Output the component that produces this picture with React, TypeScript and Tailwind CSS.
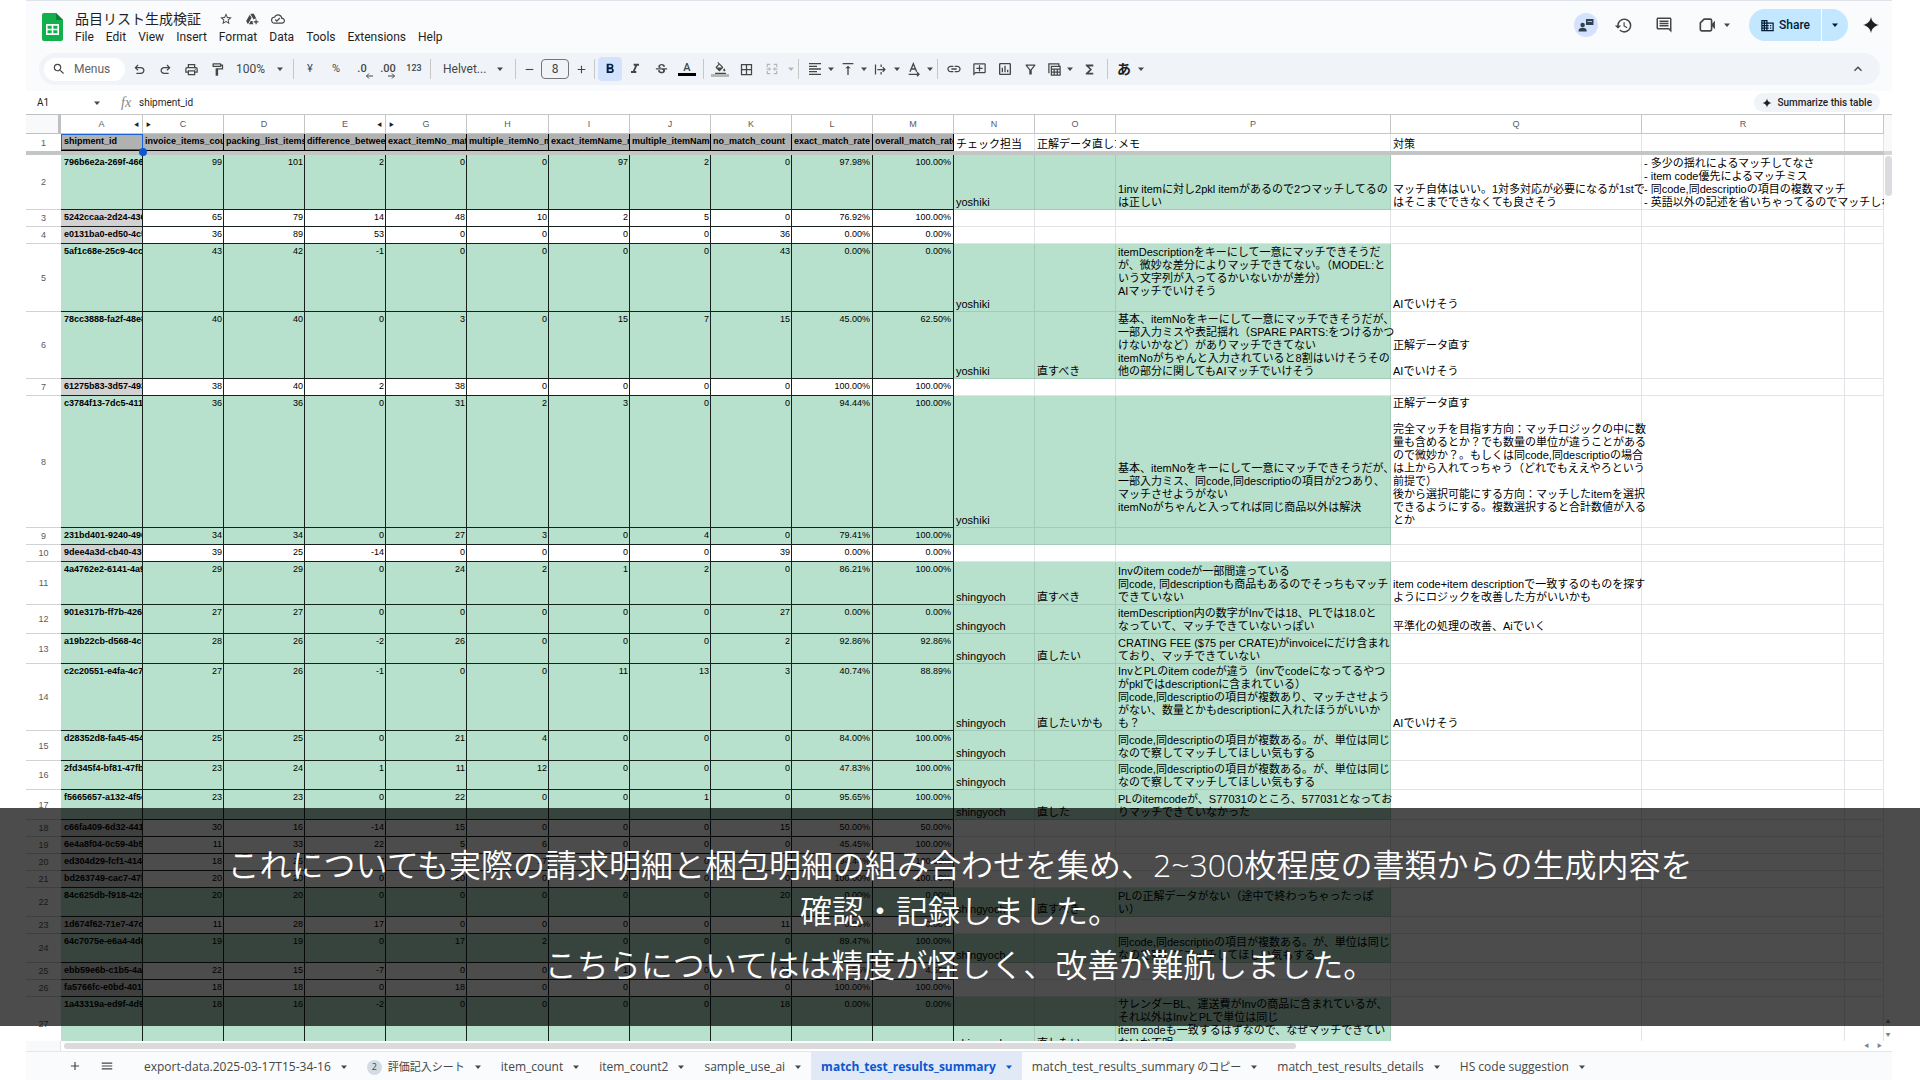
import type { ReactNode } from "react";
import clsx from "clsx";
import {
  MdAdd,
  MdBorderAll,
  MdDomain,
  MdExpandLess,
  MdFormatAlignLeft,
  MdFormatBold,
  MdFormatColorFill,
  MdFormatItalic,
  MdFunctions,
  MdHistory,
  MdLink,
  MdMenu,
  MdOutlineAddComment,
  MdOutlineAddToDrive,
  MdOutlineCloudDone,
  MdOutlineComment,
  MdOutlineFilterAlt,
  MdOutlineFormatPaint,
  MdOutlineInsertChart,
  MdOutlinePrint,
  MdRemove,
  MdSearch,
  MdStarBorder,
  MdStrikethroughS,
  MdVerticalAlignTop,
} from "react-icons/md";

type SheetRow = {
  no: number;
  height: string;
  green?: boolean;
  id: string;
  values: string[];
  checker?: string;
  fix?: string;
  memo?: string;
  plan?: string;
  extra?: string;
};

const ROWS: SheetRow[] = [
  {
    no: 2,
    height: "h-[55px]",
    green: true,
    id: "796b6e2a-269f-4664",
    values: ["99", "101", "2", "0", "0", "97", "2", "0", "97.98%", "100.00%"],
    checker: "yoshiki",
    memo: "1inv itemに対し2pkl itemがあるので2つマッチしてるの\nは正しい",
    plan: "マッチ自体はいい。1対多対応が必要になるが1stで\nはそこまでできなくても良さそう",
    extra:
      "- 多少の揺れによるマッチしてなさ\n- item code優先によるマッチミス\n- 同code,同descriptioの項目の複数マッチ\n- 英語以外の記述を省いちゃってるのでマッチしない",
  },
  {
    no: 3,
    height: "h-[17px]",
    id: "5242ccaa-2d24-4368",
    values: ["65", "79", "14", "48", "10", "2", "5", "0", "76.92%", "100.00%"],
  },
  {
    no: 4,
    height: "h-[17px]",
    id: "e0131ba0-ed50-4c52",
    values: ["36", "89", "53", "0", "0", "0", "0", "36", "0.00%", "0.00%"],
  },
  {
    no: 5,
    height: "h-[68px]",
    green: true,
    id: "5af1c68e-25c9-4cc1",
    values: ["43", "42", "-1", "0", "0", "0", "0", "43", "0.00%", "0.00%"],
    checker: "yoshiki",
    memo: "itemDescriptionをキーにして一意にマッチできそうだ\nが、微妙な差分によりマッチできてない。（MODEL:と\nいう文字列が入ってるかいないかが差分）\nAIマッチでいけそう\n ",
    plan: "AIでいけそう",
  },
  {
    no: 6,
    height: "h-[67px]",
    green: true,
    id: "78cc3888-fa2f-48e8",
    values: ["40", "40", "0", "3", "0", "15", "7", "15", "45.00%", "62.50%"],
    checker: "yoshiki",
    fix: "直すべき",
    memo: "基本、itemNoをキーにして一意にマッチできそうだが、\n一部入力ミスや表記揺れ（SPARE PARTS:をつけるかつ\nけないかなど）がありマッチできてない\nitemNoがちゃんと入力されていると8割はいけそうその\n他の部分に関してもAIマッチでいけそう",
    plan: "正解データ直す\n\nAIでいけそう",
  },
  {
    no: 7,
    height: "h-[17px]",
    id: "61275b83-3d57-493a",
    values: ["38", "40", "2", "38", "0", "0", "0", "0", "100.00%", "100.00%"],
  },
  {
    no: 8,
    height: "h-[132px]",
    green: true,
    id: "c3784f13-7dc5-4114",
    values: ["36", "36", "0", "31", "2", "3", "0", "0", "94.44%", "100.00%"],
    checker: "yoshiki",
    memo: "基本、itemNoをキーにして一意にマッチできそうだが、\n一部入力ミス、同code,同descriptioの項目が2つあり、\nマッチさせようがない\nitemNoがちゃんと入ってれば同じ商品以外は解決\n ",
    plan: "正解データ直す\n\n完全マッチを目指す方向：マッチロジックの中に数\n量も含めるとか？でも数量の単位が違うことがある\nので微妙か？。もしくは同code,同descriptioの場合\nは上から入れてっちゃう（どれでもええやろという\n前提で）\n後から選択可能にする方向：マッチしたitemを選択\nできるようにする。複数選択すると合計数値が入る\nとか",
  },
  {
    no: 9,
    height: "h-[17px]",
    green: true,
    id: "231bd401-9240-4968",
    values: ["34", "34", "0", "27", "3", "0", "4", "0", "79.41%", "100.00%"],
  },
  {
    no: 10,
    height: "h-[17px]",
    id: "9dee4a3d-cb40-43c1",
    values: ["39", "25", "-14", "0", "0", "0", "0", "39", "0.00%", "0.00%"],
  },
  {
    no: 11,
    height: "h-[43px]",
    green: true,
    id: "4a4762e2-6141-4a9b",
    values: ["29", "29", "0", "24", "2", "1", "2", "0", "86.21%", "100.00%"],
    checker: "shingyoch",
    fix: "直すべき",
    memo: "Invのitem codeが一部間違っている\n同code, 同descriptionも商品もあるのでそっちもマッチ\nできていない",
    plan: "item code+item descriptionで一致するのものを探す\nようにロジックを改善した方がいいかも",
  },
  {
    no: 12,
    height: "h-[29px]",
    green: true,
    id: "901e317b-ff7b-4268",
    values: ["27", "27", "0", "0", "0", "0", "0", "27", "0.00%", "0.00%"],
    checker: "shingyoch",
    memo: "itemDescription内の数字がInvでは18、PLでは18.0と\nなっていて、マッチできていないっぽい",
    plan: "平準化の処理の改善、Aiでいく",
  },
  {
    no: 13,
    height: "h-[30px]",
    green: true,
    id: "a19b22cb-d568-4c71",
    values: ["28", "26", "-2", "26", "0", "0", "0", "2", "92.86%", "92.86%"],
    checker: "shingyoch",
    fix: "直したい",
    memo: "CRATING FEE ($75 per CRATE)がinvoiceにだけ含まれ\nており、マッチできていない",
  },
  {
    no: 14,
    height: "h-[67px]",
    green: true,
    id: "c2c20551-e4fa-4c71",
    values: ["27", "26", "-1", "0", "0", "11", "13", "3", "40.74%", "88.89%"],
    checker: "shingyoch",
    fix: "直したいかも",
    memo: "InvとPLのitem codeが違う（invでcodeになってるやつ\nがpklではdescriptionに含まれている）\n同code,同descriptioの項目が複数あり、マッチさせよう\nがない、数量とかもdescriptionに入れたほうがいいか\nも？",
    plan: "AIでいけそう",
  },
  {
    no: 15,
    height: "h-[30px]",
    green: true,
    id: "d28352d8-fa45-4541",
    values: ["25", "25", "0", "21", "4", "0", "0", "0", "84.00%", "100.00%"],
    checker: "shingyoch",
    memo: "同code,同descriptioの項目が複数ある。が、単位は同じ\nなので察してマッチしてほしい気もする",
  },
  {
    no: 16,
    height: "h-[29px]",
    green: true,
    id: "2fd345f4-bf81-47fb-",
    values: ["23", "24", "1", "11", "12", "0", "0", "0", "47.83%", "100.00%"],
    checker: "shingyoch",
    memo: "同code,同descriptioの項目が複数ある。が、単位は同じ\nなので察してマッチしてほしい気もする",
  },
  {
    no: 17,
    height: "h-[30px]",
    green: true,
    id: "f5665657-a132-4f5c",
    values: ["23", "23", "0", "22", "0", "0", "1", "0", "95.65%", "100.00%"],
    checker: "shingyoch",
    fix: "直した",
    memo: "PLのitemcodeが、S77031のところ、577031となってお\nりマッチできていなかった",
  },
  {
    no: 18,
    height: "h-[17px]",
    id: "c66fa409-6d32-4412",
    values: ["30", "16", "-14", "15", "0", "0", "0", "15", "50.00%", "50.00%"],
  },
  {
    no: 19,
    height: "h-[17px]",
    id: "6e4a8f04-0c59-4b5c",
    values: ["11", "33", "22", "5", "6", "0", "0", "0", "45.45%", "100.00%"],
  },
  {
    no: 20,
    height: "h-[17px]",
    id: "ed304d29-fcf1-4144",
    values: ["18", "25", "7", "1", "17", "0", "0", "0", "94.44%", "100.00%"],
  },
  {
    no: 21,
    height: "h-[17px]",
    id: "bd263749-cac7-47b1",
    values: ["20", "20", "0", "20", "0", "0", "0", "0", "100.00%", "100.00%"],
  },
  {
    no: 22,
    height: "h-[29px]",
    green: true,
    id: "84c625db-f918-42c0",
    values: ["20", "20", "0", "0", "0", "0", "0", "20", "0.00%", "0.00%"],
    checker: "shingyoch",
    fix: "直すべき",
    memo: "PLの正解データがない（途中で終わっちゃったっぽ\nい）",
  },
  {
    no: 23,
    height: "h-[17px]",
    id: "1d674f62-71e7-47c0",
    values: ["11", "28", "17", "0", "0", "0", "0", "11", "0.00%", "0.00%"],
  },
  {
    no: 24,
    height: "h-[29px]",
    green: true,
    id: "64c7075e-e6a4-4d8b",
    values: ["19", "19", "0", "17", "2", "0", "0", "0", "89.47%", "100.00%"],
    checker: "shingyoch",
    memo: "同code,同descriptioの項目が複数ある。が、単位は同じ\nなので察してマッチしてほしい気もする",
  },
  {
    no: 25,
    height: "h-[17px]",
    id: "ebb59e6b-c1b5-4aa1",
    values: ["22", "15", "-7", "0", "0", "1", "0", "21", "4.55%", "4.55%"],
  },
  {
    no: 26,
    height: "h-[17px]",
    id: "fa5766fc-e0bd-4018",
    values: ["18", "18", "0", "18", "0", "0", "0", "0", "100.00%", "100.00%"],
  },
  {
    no: 27,
    height: "h-[54px]",
    green: true,
    id: "1a43319a-ed9f-4d9b",
    values: ["18", "16", "-2", "0", "0", "0", "0", "18", "0.00%", "0.00%"],
    checker: "shingyoch",
    fix: "直したい",
    memo: "サレンダーBL、運送費がInvの商品に含まれているが、\nそれ以外はInvとPLで単位は同じ\nitem codeも一致するはずなので、なぜマッチできてい\nないか不明",
  },
];

const COLUMNS = [
  { name: "A", width: "w-[82px]", before: false, after: true },
  { name: "C", width: "w-[81px]", before: true, after: false },
  { name: "D", width: "w-[81px]" },
  { name: "E", width: "w-[81px]", before: false, after: true },
  { name: "G", width: "w-[81px]", before: true, after: false },
  { name: "H", width: "w-[82px]" },
  { name: "I", width: "w-[81px]" },
  { name: "J", width: "w-[81px]" },
  { name: "K", width: "w-[81px]" },
  { name: "L", width: "w-[81px]" },
  { name: "M", width: "w-[81px]" },
  { name: "N", width: "w-[81px]" },
  { name: "O", width: "w-[81px]" },
  { name: "P", width: "w-[275px]" },
  { name: "Q", width: "w-[251px]" },
  { name: "R", width: "w-[203px]" },
  { name: "", width: "" },
];

const FIELD_NAMES = [
  "invoice_items_count",
  "packing_list_items_count",
  "difference_between",
  "exact_itemNo_match",
  "multiple_itemNo_match",
  "exact_itemName_match",
  "multiple_itemName_match",
  "no_match_count",
  "exact_match_rate",
  "overall_match_rate",
];

const MENUS = ["File", "Edit", "View", "Insert", "Format", "Data", "Tools", "Extensions", "Help"];

function Caret({ className = "text-[#444746]" }: { className?: string }) {
  return (
    <svg viewBox="0 0 8 8" className={clsx("h-2 w-2 shrink-0", className)} fill="currentColor" aria-hidden="true">
      <path d="M1 2.400h6L4 6z" />
    </svg>
  );
}

function Separator() {
  return <span className="mx-[3px] h-5 w-px shrink-0 bg-[#c7c7c7]" />;
}

function Tool({ label, width = "w-[26px]", children }: { label: string; width?: string; children: ReactNode }) {
  return (
    <button type="button" aria-label={label} className={clsx("flex h-6 shrink-0 items-center justify-center", width)}>
      {children}
    </button>
  );
}

function Glyph({ d, className = "h-4 w-4" }: { d: string; className?: string }) {
  return (
    <svg viewBox="0 0 24 24" className={className} fill="currentColor" aria-hidden="true">
      <path d={d} />
    </svg>
  );
}

const UNDO = "M7 19v-2h7.1q1.575 0 2.738-1T18 13.5 16.838 11 14.1 10H7.8l2.6 2.6L9 14 4 9l5-5 1.4 1.4L7.8 8h6.3q2.425 0 4.163 1.575T20 13.5t-1.737 3.925T14.1 19z";
const SPARK = "M12 1c.9 6.2 4.8 10.1 11 11-6.2.9-10.1 4.8-11 11-.9-6.2-4.8-10.1-11-11 6.2-.9 10.1-4.8 11-11z";

function SheetsLogo() {
  return (
    <svg viewBox="0 0 21 28" className="h-7 w-[21px]" aria-hidden="true">
      <path d="M2 0h12l7 7v19a2 2 0 0 1-2 2H2a2 2 0 0 1-2-2V2a2 2 0 0 1 2-2z" fill="#12b04c" />
      <path d="M14 0l7 7h-7z" fill="#0b8038" />
      <path d="M4 11h13v11H4zM5.6 12.7v3h4.1v-3zM11.3 12.7v3h4.1v-3zM5.6 17.3v3h4.1v-3zM11.3 17.3v3h4.1v-3z" fill="#fff" fillRule="evenodd" />
    </svg>
  );
}

function TitleBar() {
  return (
    <header className="flex h-[52px] items-start justify-between pr-3 pl-4">
      <div className="flex gap-3">
        <div className="pt-3">
          <SheetsLogo />
        </div>
        <div>
          <div className="flex h-9 items-center gap-3 text-[#444746]">
            <h1 className="text-sm text-[#1f1f1f]">品目リスト生成検証</h1>
            <button type="button" aria-label="Star" className="ml-1.5"><MdStarBorder className="size-[14px]" /></button>
            <button type="button" aria-label="Move"><MdOutlineAddToDrive className="size-[14px]" /></button>
            <button type="button" aria-label="Saved to Drive"><MdOutlineCloudDone className="size-[14px]" /></button>
          </div>
          <nav className="-mt-2 flex h-4 items-center gap-3 text-xs text-[#1f1f1f]">
            {MENUS.map((menu) => (
              <button type="button" key={menu}>{menu}</button>
            ))}
          </nav>
        </div>
      </div>

      <div className="flex items-center pt-2 text-[#444746]">
        <button type="button" aria-label="Present" className="flex h-6 w-6 items-center justify-center rounded-full bg-[#d3e3fd]">
          <svg viewBox="0 0 24 24" className="h-[18px] w-[18px]" fill="#33414f" aria-hidden="true">
            <circle cx="7.5" cy="12" r="3" />
            <path d="M2 20.500c0-3.500 2.500-4.700 5.500-4.700s5.500 1.200 5.500 4.700z" />
            <path d="M12 4h10v8h-10z" />
            <path d="M14 7h6v1h-6z" fill="#d3e3fd" />
          </svg>
        </button>
        <button type="button" aria-label="History" className="ml-4"><MdHistory className="size-[19px]" /></button>
        <button type="button" aria-label="Comments" className="ml-[22px]"><MdOutlineComment className="size-[18px]" /></button>
        <button type="button" aria-label="Meet" className="ml-6 flex items-center gap-1.5">
          <svg viewBox="0 0 24 24" className="h-5 w-5" aria-hidden="true">
            <path d="M8.500 5H16q1.500 0 1.500 1.500v11Q17.500 19 16 19H5.500Q4 19 4 17.500v-8z" fill="none" stroke="currentColor" strokeWidth="2" strokeLinejoin="round" />
            <path d="M17.500 11l4-4v10l-4-4z" fill="currentColor" />
          </svg>
          <Caret />
        </button>
        <div className="ml-[18px] flex h-8 overflow-hidden rounded-full bg-[#c2e7ff] text-[#001d35]">
          <button type="button" className="flex w-[73px] items-center justify-center gap-1 border-r border-white text-xs font-medium">
            <MdDomain className="size-[15px]" />
            Share
          </button>
          <button type="button" aria-label="Share options" className="flex w-[26px] items-center justify-center">
            <Caret className="text-[#001d35]" />
          </button>
        </div>
        <button type="button" aria-label="Gemini" className="ml-[14px] text-[#1f1f1f]">
          <Glyph d={SPARK} className="h-[18px] w-[18px]" />
        </button>
      </div>
    </header>
  );
}

function Toolbar() {
  return (
    <div className="mr-3 ml-[13px] flex h-8 items-center rounded-full bg-[#f0f4f9] pl-[5px] text-[#444746]">
      <label className="mr-px flex h-[23px] w-[81px] shrink-0 items-center gap-2 rounded-full bg-white pl-2">
        <MdSearch className="size-[14px] shrink-0" />
        <input aria-label="Menus" placeholder="Menus" className="w-12 text-xs outline-none placeholder:text-[#5f6368]" />
      </label>
      <Tool label="Undo"><Glyph d={UNDO} className="h-[15px] w-[15px]" /></Tool>
      <Tool label="Redo"><Glyph d={UNDO} className="h-[15px] w-[15px] -scale-x-100" /></Tool>
      <Tool label="Print"><MdOutlinePrint className="size-[15px]" /></Tool>
      <Tool label="Paint format"><MdOutlineFormatPaint className="size-[15px]" /></Tool>
      <label className="ml-1.5 flex w-12 shrink-0 items-center justify-between">
        <select aria-label="Zoom" className="w-10 appearance-none text-xs outline-none">
          <option>100%</option>
        </select>
        <Caret />
      </label>
      <span className="w-1.5" />
      <Separator />
      <Tool label="Format as currency"><span className="text-[11px]">¥</span></Tool>
      <Tool label="Format as percent"><span className="text-[11px]">%</span></Tool>
      <Tool label="Decrease decimals">
        <span className="relative text-[11px] leading-3 font-medium">
          .0
          <svg viewBox="0 0 8 6" className="absolute -right-1.5 -bottom-1 h-1.5 w-2" fill="none" stroke="currentColor" aria-hidden="true"><path d="M8 3H1.500M4 .5L1.500 3 4 5.500" /></svg>
        </span>
      </Tool>
      <Tool label="Increase decimals">
        <span className="relative text-[11px] leading-3 font-medium">
          .00
          <svg viewBox="0 0 8 6" className="absolute right-0 -bottom-1 h-1.5 w-2" fill="none" stroke="currentColor" aria-hidden="true"><path d="M0 3h6.500M4 .5L6.500 3 4 5.500" /></svg>
        </span>
      </Tool>
      <Tool label="More formats"><span className="text-[9px] font-medium">123</span></Tool>
      <Separator />
      <label className="ml-[9px] flex w-[61px] shrink-0 items-center justify-between">
        <select aria-label="Font" className="w-12 appearance-none text-xs outline-none">
          <option>Helvet...</option>
        </select>
        <Caret />
      </label>
      <span className="w-2" />
      <Separator />
      <Tool label="Decrease font size" width="w-5"><MdRemove className="size-[13px]" /></Tool>
      <input aria-label="Font size" defaultValue="8" className="mx-0.5 h-5 w-7 shrink-0 rounded border border-[#747775] text-center text-xs outline-none" />
      <Tool label="Increase font size" width="w-5"><MdAdd className="size-[13px]" /></Tool>
      <Separator />
      <button type="button" aria-label="Bold" className="flex h-6 w-6 shrink-0 items-center justify-center rounded bg-[#d3e3fd] text-[#041e49]">
        <MdFormatBold className="size-4" />
      </button>
      <Tool label="Italic"><MdFormatItalic className="size-4" /></Tool>
      <Tool label="Strikethrough"><MdStrikethroughS className="size-[15px]" /></Tool>
      <Tool label="Text color">
        <span className="flex flex-col items-center">
          <span className="text-[11px] leading-[11px] font-medium">A</span>
          <span className="h-[3px] w-[18px] bg-black" />
        </span>
      </Tool>
      <Separator />
      <Tool label="Fill color">
        <span className="flex flex-col items-center">
          <MdFormatColorFill className="-mb-px size-[13px]" />
          <span className="h-[3px] w-[18px] bg-[#b7b7b7]" />
        </span>
      </Tool>
      <Tool label="Borders"><MdBorderAll className="size-[15px]" /></Tool>
      <Tool label="Merge cells">
        <svg viewBox="0 0 24 24" className="h-[14px] w-[14px] text-[#b4b7ba]" fill="none" stroke="currentColor" strokeWidth="2" aria-hidden="true">
          <path d="M9 4H4v5M15 4h5v5M9 20H4v-5M15 20h5v-5M2 12h7M6.500 9.500L9 12l-2.500 2.500M22 12h-7M17.500 9.500L15 12l2.500 2.500" />
        </svg>
      </Tool>
      <span className="w-0.5" />
      <Caret className="text-[#b4b7ba]" />
      <Separator />
      <Tool label="Horizontal align" width="w-[25px]"><MdFormatAlignLeft className="size-4" /></Tool>
      <Caret />
      <Tool label="Vertical align" width="w-[25px]"><MdVerticalAlignTop className="size-4" /></Tool>
      <Caret />
      <Tool label="Text wrapping" width="w-[25px]">
        <svg viewBox="0 0 24 24" className="h-[15px] w-[15px]" fill="none" stroke="currentColor" strokeWidth="2" aria-hidden="true">
          <path d="M4 4v16M13 4v4M13 16v4M7 12h12M15.500 8.500L19 12l-3.500 3.500" />
        </svg>
      </Tool>
      <Caret />
      <Tool label="Text rotation" width="w-[25px]">
        <svg viewBox="0 0 24 24" className="h-4 w-4" fill="none" stroke="currentColor" strokeWidth="2" aria-hidden="true">
          <path d="M6 16L11 4l5 12M8 12h6M4 20h15M16.500 17l3 3-3 3" />
        </svg>
      </Tool>
      <Caret />
      <Separator />
      <Tool label="Insert link" width="w-[25px]"><MdLink className="size-4" /></Tool>
      <Tool label="Insert comment"><MdOutlineAddComment className="size-[15px] -scale-x-100" /></Tool>
      <Tool label="Insert chart" width="w-[25px]"><MdOutlineInsertChart className="size-4" /></Tool>
      <Tool label="Create a filter"><MdOutlineFilterAlt className="size-[15px]" /></Tool>
      <Tool label="Table views" width="w-[23px]">
        <svg viewBox="0 0 24 24" className="h-[15px] w-[15px]" fill="none" stroke="currentColor" strokeWidth="2" aria-hidden="true">
          <path d="M3 18V3h16v3M7 7h14v14H7zM7 11.500h14M7 16h14M11.500 11.500V21M16.500 11.500V21" />
        </svg>
      </Tool>
      <Caret />
      <Tool label="Functions" width="w-[30px]"><MdFunctions className="size-[15px]" /></Tool>
      <Separator />
      <Tool label="Input tools"><span className="text-sm font-bold text-[#1f1f1f]">あ</span></Tool>
      <Caret />
      <button type="button" aria-label="Hide the menus" className="mr-[14px] ml-auto">
        <MdExpandLess className="size-4" />
      </button>
    </div>
  );
}

function FormulaBar() {
  return (
    <div className="mt-1.5 flex h-[23px] shrink-0 items-center bg-white pr-3 pl-[11px] text-[10px] text-[#1f1f1f]">
      <input aria-label="Name box" defaultValue="A1" className="w-14 outline-none" />
      <Caret />
      <span className="ml-5 w-[18px] font-['Liberation_Serif',serif] text-sm text-[#80868b] italic">fx</span>
      <input aria-label="Formula" defaultValue="shipment_id" className="min-w-0 flex-1 outline-none" />
      <button type="button" className="flex h-[19px] items-center gap-[5px] rounded-full bg-[#f0f4f9] px-2 font-medium">
        <Glyph d={SPARK} className="h-[10px] w-[10px]" />
        Summarize this table
      </button>
    </div>
  );
}

function DataRow({ row }: { row: SheetRow }) {
  const note = clsx("border-r border-b p-0 pl-0.5 align-bottom", row.green ? "border-black/10 bg-[#b7e1cd]" : "border-[#e1e3e6]");
  const plain = "border-r border-b border-[#e1e3e6] p-0 pl-0.5 align-bottom";
  return (
    <tr className={row.height}>
      <th scope="row" className="border-b border-[#d0d2d4] p-0 text-center align-middle text-[9px] leading-3 font-normal text-[#575b5f]">
        {row.no}
      </th>
      <td
        className={clsx(
          "overflow-hidden border-r border-b border-[#17201c] p-0 pt-px pl-[3px] align-top text-[9px] leading-3 font-bold",
          row.green ? "bg-[#b7e1cd]" : "bg-[#d3d2d2]",
        )}
      >
        {row.id}
      </td>
      {row.values.map((value, i) => (
        <td
          key={i}
          className={clsx(
            "border-r border-b border-[#17201c] p-0 pt-px align-top text-right text-[9px] leading-3",
            i > 7 ? "pr-0.5" : "pr-px",
            row.green && "bg-[#b7e1cd]",
          )}
        >
          {value}
        </td>
      ))}
      <td className={note}>{row.checker}</td>
      <td className={note}>{row.fix}</td>
      <td className={note}>{row.memo}</td>
      <td className={plain}>{row.plan}</td>
      <td className={plain}>{row.extra}</td>
      <td className="border-r border-b border-[#e1e3e6] p-0" />
    </tr>
  );
}

function Sheet() {
  return (
    <div className="flex min-h-0 flex-1 overflow-hidden bg-white">
      <div className="min-w-0 flex-1 overflow-hidden">
        <table className="w-full table-fixed border-separate border-spacing-0 font-['Liberation_Sans','Noto_Sans_CJK_JP',sans-serif] text-[11px] leading-[13px] whitespace-pre text-black">
          <colgroup>
            <col className="w-[35px]" />
            {COLUMNS.map((column) => (
              <col key={column.name} className={column.width} />
            ))}
          </colgroup>
          <thead>
            <tr className="h-5 text-[9px] leading-3 text-[#575b5f]">
              <td className="border-t border-r-[3px] border-b border-[#c0c0c0] bg-[#f8f9fa] p-0" />
              {COLUMNS.map((column) => (
                <th key={column.name} scope="col" className="border-t border-r border-b border-[#c4c7c5] p-0 font-normal">
                  <div className="flex items-center justify-between px-[3px]">
                    <span className="w-2 text-left text-[5px] text-[#1f1f1f]">{column.before && "▶"}</span>
                    {column.name}
                    <span className="w-2 text-right text-[5px] text-[#1f1f1f]">{column.after && "◀"}</span>
                  </div>
                </th>
              ))}
            </tr>
            <tr className="h-[17px] text-left">
              <th scope="row" className="p-0 text-center text-[9px] leading-3 font-normal text-[#575b5f]">1</th>
              <td className="relative border-b border-black bg-[#b0b1b1] p-0 pt-px pl-[3px] align-top text-[9px] leading-3 font-bold">
                shipment_id
                <span className="absolute inset-0 border border-[#1a62d6]" />
                <span className="absolute -right-1 -bottom-1.5 z-10 h-2 w-2 rounded-full bg-[#0b57d0]" />
              </td>
              {FIELD_NAMES.map((field) => (
                <th key={field} className="overflow-hidden border-r border-b border-black bg-[#b0b1b1] p-0 pt-px pl-0.5 align-top text-[9px] leading-3 font-bold">
                  {field}
                </th>
              ))}
              <td className="overflow-hidden border-r border-[#e1e3e6] p-0 pl-0.5 align-bottom">チェック担当</td>
              <td className="overflow-hidden p-0 pl-0.5 align-bottom">正解データ直したか</td>
              <td className="border-r border-[#e1e3e6] p-0 pl-0.5 align-bottom">メモ</td>
              <td className="border-r border-[#e1e3e6] p-0 pl-0.5 align-bottom">対策</td>
              <td className="border-r border-[#e1e3e6] p-0" />
              <td className="border-r border-[#e1e3e6] p-0" />
            </tr>
            <tr className="h-1">
              <td colSpan={18} className="bg-[#c4c6c5] p-0" />
            </tr>
          </thead>
          <tbody>
            {ROWS.map((row) => (
              <DataRow key={row.no} row={row} />
            ))}
          </tbody>
        </table>
      </div>
      {/* vertical scroll lane */}
      <div className="flex w-2 shrink-0 flex-col items-center bg-white">
        <div className="h-[37px] w-full border-t border-[#c4c7c5] bg-[#f8f9fa]" />
        <div className="h-1 w-full bg-[#d5d7d6]" />
        <div className="mt-px h-10 w-[7px] rounded-full bg-[#dadce0]" />
        <div className="mt-auto flex flex-col gap-1.5 pb-[3px] text-center text-[5px] leading-[7px] text-[#80868b]">
          <span>▲</span>
          <span>▼</span>
        </div>
      </div>
    </div>
  );
}

type SheetTab = { name: string; suffix?: string; badge?: string; active?: boolean };

const TABS: SheetTab[] = [
  { name: "export-data.2025-03-17T15-34-16" },
  { name: "評価記入シート", badge: "2" },
  { name: "item_count" },
  { name: "item_count2" },
  { name: "sample_use_ai" },
  { name: "match_test_results_summary", active: true },
  { name: "match_test_results_summary", suffix: " のコピー" },
  { name: "match_test_results_details" },
  { name: "HS code suggestion" },
];

function SheetTabs() {
  return (
    <footer className="flex h-7 shrink-0 items-stretch bg-[#f9fbfd] pl-9 font-['Open_Sans','Noto_Sans_CJK_JP',sans-serif] text-[#444746]">
      <button type="button" aria-label="Add sheet" className="w-[26px]"><MdAdd className="mx-auto size-[14px]" /></button>
      <button type="button" aria-label="All sheets" className="mr-[14px] ml-1.5 w-[26px]"><MdMenu className="mx-auto size-[14px]" /></button>
      {TABS.map((tab, i) => (
        <button
          type="button"
          key={i}
          className={clsx(
            "flex items-center gap-[9px] pt-0.5 pr-[9px] pl-[10px] text-xs whitespace-nowrap",
            tab.active ? "bg-[#e1e9f7] font-bold text-[#0b57d0]" : "font-medium",
          )}
        >
          <span className="flex items-center">
            {tab.badge && (
              <span className="mr-1.5 flex h-[15px] w-[15px] items-center justify-center rounded-full bg-[#d3dbe5] text-[9px]">{tab.badge}</span>
            )}
            <span className={clsx(tab.badge && "text-[11px] font-normal")}>
              {tab.name}
              {tab.suffix && <span className="text-[11px] font-normal">{tab.suffix}</span>}
            </span>
          </span>
          <Caret className={tab.active ? "text-[#0b57d0]" : "text-[#444746]"} />
        </button>
      ))}
    </footer>
  );
}

function Caption() {
  return (
    <div className="absolute inset-x-0 bottom-[54px] flex flex-col gap-2 bg-black/70 pt-[34px] pb-[38px] text-center font-['Open_Sans','Noto_Sans_CJK_JP',sans-serif] text-[32px] leading-[46px] font-[350] text-white">
      <p>
        これについても実際の請求明細と梱包明細の組み合わせを集め、2~300枚程度の書類からの生成内容を
        <br />
        確認・記録しました。
      </p>
      <p>こちらについてはは精度が怪しく、改善が難航しました。</p>
    </div>
  );
}

export default function App() {
  return (
    <div lang="ja" className="relative h-screen overflow-hidden bg-white font-[Roboto,'Noto_Sans_CJK_JP',sans-serif]">
      <div className="mr-7 ml-[26px] flex h-full flex-col border-t border-[#e1e3ea] bg-[#f9fbfd]">
        <TitleBar />
        <Toolbar />
        <FormulaBar />
        <Sheet />
        {/* horizontal scroll lane */}
        <div className="flex h-[11px] shrink-0 items-center border-b border-[#e4e8ee] bg-white">
          <span className="h-full w-[35px] border-r border-[#e1e3e6] bg-[#f8f9fa]" />
          <span className="ml-[3px] h-1.5 w-[66%] rounded-full bg-[#dadadc]" />
          <span className="mr-[10px] ml-auto flex gap-2 text-[5px] text-[#80868b]">
            <span>◀</span>
            <span>▶</span>
          </span>
        </div>
        <SheetTabs />
      </div>
      <Caption />
    </div>
  );
}
